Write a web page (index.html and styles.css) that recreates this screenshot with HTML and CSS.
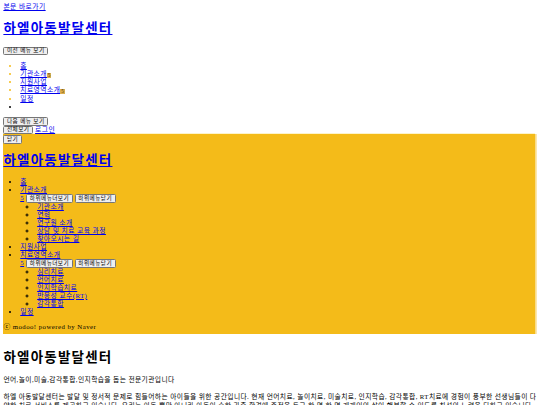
FILE: index.html
```html
<!DOCTYPE html>
<html lang="ko">
<head>
<meta charset="utf-8">
<title>하엘아동발달센터</title>
<link rel="stylesheet" href="styles.css">
</head>
<body>
<a href="#content" class="skip">본문 바로가기</a>
<h1 class="logo"><a href="#">하엘아동발달센터</a></h1>
<div class="btn-line prev"><button type="button">이전 메뉴 보기</button></div>
<ul class="top-menu">
  <li><a href="#">홈</a></li>
  <li><a href="#">기관소개</a><span class="badge">5</span></li>
  <li><a href="#">지원사업</a></li>
  <li><a href="#">치료영역소개</a><span class="badge">5</span></li>
  <li><a href="#">일정</a></li>
  <li class="empty"></li>
</ul>
<div class="btn-line"><button type="button">다음 메뉴 보기</button></div>
<div class="btn-line"><button type="button">전체보기</button> <a href="#">로그인</a></div>
<div class="drawer">
  <div class="btn-line"><button type="button">닫기</button></div>
  <h1 class="logo"><a href="#">하엘아동발달센터</a></h1>
  <ul class="nav">
    <li><a href="#">홈</a></li>
    <li><a href="#">기관소개</a>
      <div class="btn-line"><a href="#">5</a> <button type="button">하위메뉴더보기</button> <button type="button">하위메뉴닫기</button></div>
      <ul class="sub">
        <li><a href="#">기관소개</a></li>
        <li><a href="#">연혁</a></li>
        <li><a href="#">연구원 소개</a></li>
        <li><a href="#">상담 및 치료 교육 과정</a></li>
        <li><a href="#">찾아오시는 길</a></li>
      </ul>
    </li>
    <li><a href="#">지원사업</a></li>
    <li><a href="#">치료영역소개</a>
      <div class="btn-line"><a href="#">5</a> <button type="button">하위메뉴더보기</button> <button type="button">하위메뉴닫기</button></div>
      <ul class="sub">
        <li><a href="#">심리치료</a></li>
        <li><a href="#">언어치료</a></li>
        <li><a href="#">인지학습치료</a></li>
        <li><a href="#">반응성 교수(RT)</a></li>
        <li><a href="#">감각통합</a></li>
      </ul>
    </li>
    <li><a href="#">일정</a></li>
  </ul>
  <p class="copy">ⓒ modoo! powered by Naver</p>
</div>
<div id="content" class="content">
  <h1>하엘아동발달센터</h1>
  <p>언어,놀이,미술,감각통합,인지학습을 돕는 전문기관입니다</p>
  <p class="desc">하엘 아동발달센터는 발달 및 정서적 문제로 힘들어하는 아이들을 위한 공간입니다. 현재 언어치료, 놀이치료, 미술치료, 인지학습, 감각통합, RT치료에 경험이 풍부한 선생님들이 다양한 치료 서비스를 제공하고 있습니다. 우리는 아동 뿐만 아니라 아동이 속한 가족 환경에 중점을 두고 한 명 한 명 개개인의 삶이 행복할 수 있도록 최선의 노력을 다하고 있습니다.</p>
</div>
</body>
</html>
```

FILE: styles.css
```css
html {
  zoom: 0.421875;
}
body {
  margin: 8px;
  font-family: "Liberation Serif", "Noto Sans CJK KR", serif;
  font-size: 16px;
  line-height: 1.2;
  letter-spacing: 0.07em;
  color: #000;
}
h1 {
  letter-spacing: 0.09em;
}
.btn-line {
  line-height: 19.2px;
}
.btn-line.prev {
  padding-top: 3px;
}
button {
  font-family: "Liberation Sans", "Noto Sans CJK KR", sans-serif;
  font-size: 13.33px;
  line-height: 14px;
  letter-spacing: 0.08em;
  height: 20px;
  box-sizing: border-box;
  padding: 1px 6px;
  vertical-align: top;
}
.top-menu li::marker {
  color: #f4bb19;
}
.top-menu li.empty::marker {
  color: #000;
}
.badge {
  display: inline-block;
  background: #dcae4e;
  color: #3d2c00;
  font-size: 12px;
  line-height: 13px;
  letter-spacing: 0;
  padding: 0 2px;
  vertical-align: -1px;
}
.drawer {
  background: #f4bb19;
  margin: 0 -8px 40px;
  width: 1268px;
  padding: 2px 8px 6px;
  box-sizing: border-box;
  box-shadow: 0 -2px 0 #fdf2c2, 4px 0 0 #f9dc8a;
}
.drawer .copy {
  margin: 10px 0 0;
}
.sub {
  margin: 0;
  list-style-type: circle;
}
.content p {
  letter-spacing: 0.06em;
}
.content .desc {
  margin-top: 19px;
  line-height: 1.35;
}
```
